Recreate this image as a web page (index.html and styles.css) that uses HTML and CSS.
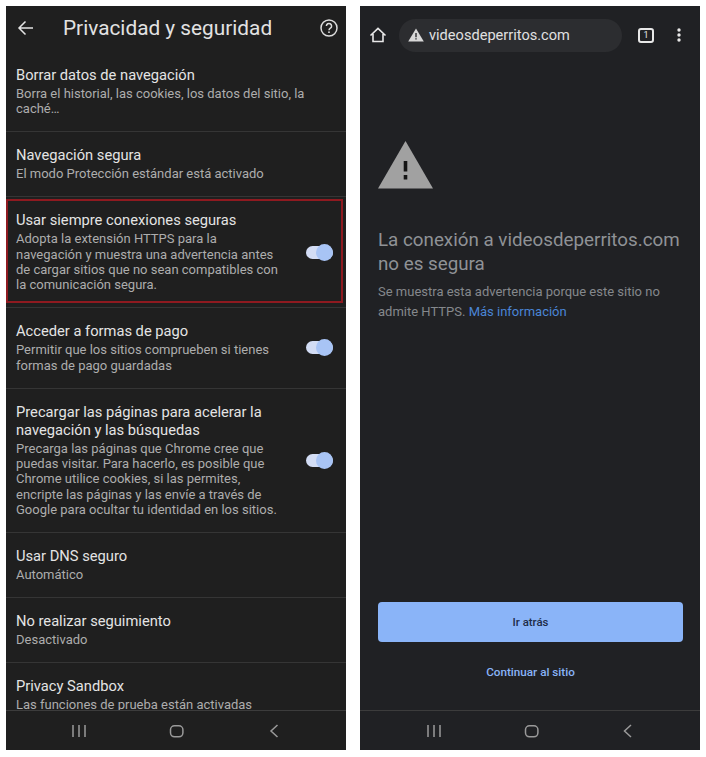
FILE: index.html
```html
<!DOCTYPE html>
<html lang="es">
<head>
  <meta charset="UTF-8">
  <meta name="viewport" content="width=device-width, initial-scale=1.0">
  <title>Privacidad y seguridad</title>
  <link rel="stylesheet" href="styles.css">
</head>
<body>

  <!-- Settings phone -->
  <div class="phone settings">
    <div class="app-bar">
      <svg class="back" width="18" height="18" viewBox="0 0 18 18"><path d="M16 9H2.500M8.500 2.500L2 9l6.500 6.500" fill="none" stroke="#e4e4e4" stroke-width="1.500"/></svg>
      <h1>Privacidad y seguridad</h1>
      <svg class="help" width="20" height="20" viewBox="0 0 20 20">
        <circle cx="10" cy="10" r="8" fill="none" stroke="#dcdcdc" stroke-width="1.500"/>
        <path d="M7.400 8a2.600 2.600 0 1 1 4 2.200c-.9.6-1.400 1-1.400 2.100" fill="none" stroke="#dcdcdc" stroke-width="1.500"/>
        <rect x="9.200" y="13.400" width="1.600" height="1.600" fill="#dcdcdc"/>
      </svg>
    </div>

    <div class="list">
      <div class="row">
        <div class="row-text wide">
          <div class="row-title">Borrar datos de navegación</div>
          <div class="row-desc">Borra el historial, las cookies, los datos del sitio, la caché…</div>
        </div>
      </div>
      <div class="row">
        <div class="row-text wide">
          <div class="row-title">Navegación segura</div>
          <div class="row-desc">El modo Protección estándar está activado</div>
        </div>
      </div>
      <div class="row highlighted">
        <div class="row-text">
          <div class="row-title">Usar siempre conexiones seguras</div>
          <div class="row-desc">Adopta la extensión HTTPS para la navegación y muestra una advertencia antes de cargar sitios que no sean compatibles con la comunicación segura.</div>
        </div>
        <div class="toggle"><span class="thumb"></span></div>
      </div>
      <div class="row">
        <div class="row-text">
          <div class="row-title">Acceder a formas de pago</div>
          <div class="row-desc">Permitir que los sitios comprueben si tienes formas de pago guardadas</div>
        </div>
        <div class="toggle"><span class="thumb"></span></div>
      </div>
      <div class="row">
        <div class="row-text">
          <div class="row-title">Precargar las páginas para acelerar la navegación y las búsquedas</div>
          <div class="row-desc">Precarga las páginas que Chrome cree que puedas visitar. Para hacerlo, es posible que Chrome utilice cookies, si las permites, encripte las páginas y las envíe a través de Google para ocultar tu identidad en los sitios.</div>
        </div>
        <div class="toggle"><span class="thumb"></span></div>
      </div>
      <div class="row">
        <div class="row-text wide">
          <div class="row-title">Usar DNS seguro</div>
          <div class="row-desc">Automático</div>
        </div>
      </div>
      <div class="row">
        <div class="row-text wide">
          <div class="row-title">No realizar seguimiento</div>
          <div class="row-desc">Desactivado</div>
        </div>
      </div>
      <div class="row">
        <div class="row-text wide">
          <div class="row-title">Privacy Sandbox</div>
          <div class="row-desc">Las funciones de prueba están activadas</div>
        </div>
      </div>
    </div>

    <div class="nav-bar">
      <svg width="18" height="16" viewBox="0 0 18 16"><path d="M3 2v12M9 2v12M15 2v12" stroke="#9a9a9a" stroke-width="1.500"/></svg>
      <svg width="18" height="16" viewBox="0 0 18 16"><rect x="3.500" y="2.800" width="12.400" height="11" rx="4" fill="none" stroke="#9a9a9a" stroke-width="1.500"/></svg>
      <svg width="18" height="16" viewBox="0 0 18 16"><path d="M13.500 2L7 8l6.500 6" fill="none" stroke="#9a9a9a" stroke-width="1.500"/></svg>
    </div>
  </div>

  <!-- Browser phone -->
  <div class="phone browser">
    <div class="toolbar">
      <svg class="home" width="18" height="18" viewBox="0 0 18 18"><path d="M1.500 9.500L9 2.300l7.500 7.200M4 8v7.500h10V8" fill="none" stroke="#e8e8e8" stroke-width="1.600"/></svg>
      <div class="omnibox">
        <svg width="16" height="14" viewBox="0 0 16 14"><path d="M8 .5L15.800 13.500H.2z" fill="#d8d8d8"/><path d="M7.300 5h1.400v4.300H7.300zM7.300 10.200h1.400v1.400H7.300z" fill="#2b2c2f"/></svg>
        <span class="url">videosdeperritos.com</span>
      </div>
      <div class="tab-count">1</div>
      <svg class="menu" width="4" height="14" viewBox="0 0 4 14"><circle cx="2" cy="2" r="1.700" fill="#e8e8e8"/><circle cx="2" cy="7" r="1.700" fill="#e8e8e8"/><circle cx="2" cy="12" r="1.700" fill="#e8e8e8"/></svg>
    </div>

    <div class="interstitial">
      <svg class="big-warning" width="55" height="48" viewBox="0 0 55 48"><path d="M27.500 0L55 47.500H0z" fill="#a1a1a1"/><path d="M25.700 20h3.600v10.500h-3.600zM25.700 34h3.600v4.500h-3.600z" fill="#151515"/></svg>
      <h2>La conexión a videosdeperritos.com no es segura</h2>
      <p>Se muestra esta advertencia porque este sitio no admite HTTPS. <a href="#">Más información</a></p>
      <div class="actions">
        <button class="primary">Ir atrás</button>
        <button class="secondary">Continuar al sitio</button>
      </div>
    </div>

    <div class="nav-bar">
      <svg class="nudge" width="18" height="16" viewBox="0 0 18 16"><path d="M3 2v12M9 2v12M15 2v12" stroke="#9a9a9a" stroke-width="1.500"/></svg>
      <svg width="18" height="16" viewBox="0 0 18 16"><rect x="3.500" y="2.800" width="12.400" height="11" rx="4" fill="none" stroke="#9a9a9a" stroke-width="1.500"/></svg>
      <svg width="18" height="16" viewBox="0 0 18 16"><path d="M13 2L6.500 8l6.500 6" fill="none" stroke="#9a9a9a" stroke-width="1.500"/></svg>
    </div>
  </div>

</body>
</html>
```

FILE: styles.css
```css
body {
  font-family: Roboto, "Liberation Sans", sans-serif;
  display: flex;
  gap: 14px;
  margin: 0;
  padding: 6px;
  background-color: white;
}

.phone {
  width: 340px;
  height: 744px;
  display: flex;
  flex-direction: column;
  flex-shrink: 0;
  overflow: hidden;
}
.settings {
  background-color: #1f1f1f;
}
.browser {
  background-color: #202124;
}

/* Settings app bar */
.app-bar {
  height: 46px;
  flex-shrink: 0;
  display: flex;
  align-items: center;
  padding: 0 7px 2px 11px;
  box-sizing: border-box;
}
.app-bar h1 {
  flex: 1;
  margin: 0 0 0 28px;
  font-size: 20.8px;
  font-weight: 400;
  color: #e2e2e2;
}

/* Settings rows */
.list {
  flex: 1;
  min-height: 0;
  overflow: hidden;
}
.row {
  position: relative;
  display: flex;
  align-items: center;
  justify-content: space-between;
  padding: 14px 13px 14.5px 10px;
  border-bottom: 1px solid #353535;
}
.row-text {
  width: 266px;
}
.row-text.wide {
  width: 300px;
}
.row-title {
  font-size: 14.7px;
  line-height: 18px;
  color: #e4e4e4;
  margin-bottom: 2px;
}
.row-desc {
  font-size: 13px;
  line-height: 15.4px;
  color: #adadad;
}
.highlighted::after {
  content: "";
  position: absolute;
  left: 0;
  right: 3px;
  top: 2px;
  bottom: 4px;
  border: 2px solid #8f1a20;
}

/* Toggle */
.toggle {
  position: relative;
  width: 27px;
  height: 13px;
  border-radius: 7px;
  background-color: #d3ddf5;
}
.thumb {
  position: absolute;
  right: 0;
  top: -2px;
  width: 17px;
  height: 17px;
  border-radius: 50%;
  background-color: #a8c4f5;
}

/* Bottom navigation */
.nav-bar {
  height: 39px;
  flex-shrink: 0;
  display: flex;
  align-items: center;
  justify-content: space-between;
  padding: 0 64px;
  border-top: 1px solid #3c3c3c;
}
.nudge {
  margin-left: 1px;
}

/* Browser toolbar */
.toolbar {
  height: 58px;
  flex-shrink: 0;
  display: flex;
  align-items: center;
  padding: 0 19px 0 9px;
}
.omnibox {
  width: 223px;
  height: 33px;
  box-sizing: border-box;
  margin-left: 12px;
  padding-left: 9px;
  display: flex;
  align-items: center;
  gap: 5px;
  border-radius: 17px;
  background-color: #2c2d30;
}
.url {
  font-size: 14.6px;
  color: #e0e0e0;
}
.tab-count {
  width: 12px;
  height: 11px;
  margin-left: 16px;
  border: 2px solid #e8e8e8;
  border-radius: 3px;
  font-size: 9px;
  line-height: 11px;
  text-align: center;
  color: #e8e8e8;
}
.menu {
  margin-left: auto;
}

/* Warning page */
.interstitial {
  flex: 1;
  min-height: 0;
  display: flex;
  flex-direction: column;
  padding: 77px 17px 0 18px;
}
.big-warning {
  flex-shrink: 0;
}
.interstitial h2 {
  margin: 39px 0 0;
  font-size: 18.8px;
  line-height: 24px;
  font-weight: 400;
  color: #8f9296;
}
.interstitial p {
  margin: 6px 0 0;
  font-size: 13px;
  line-height: 20px;
  color: #85888c;
}
.interstitial a {
  color: #4a85d6;
  text-decoration: none;
}
.actions {
  margin-top: auto;
  padding-bottom: 20px;
}
.primary {
  display: block;
  width: 100%;
  height: 40px;
  border: none;
  border-radius: 4px;
  background-color: #8ab4f8;
  color: #202c48;
  font-family: inherit;
  font-size: 11.4px;
  font-weight: 500;
}
.secondary {
  display: block;
  width: 100%;
  height: 36px;
  margin-top: 12px;
  border: none;
  background: none;
  color: #8ab4f8;
  font-family: inherit;
  font-size: 11.7px;
  font-weight: 500;
}
```
